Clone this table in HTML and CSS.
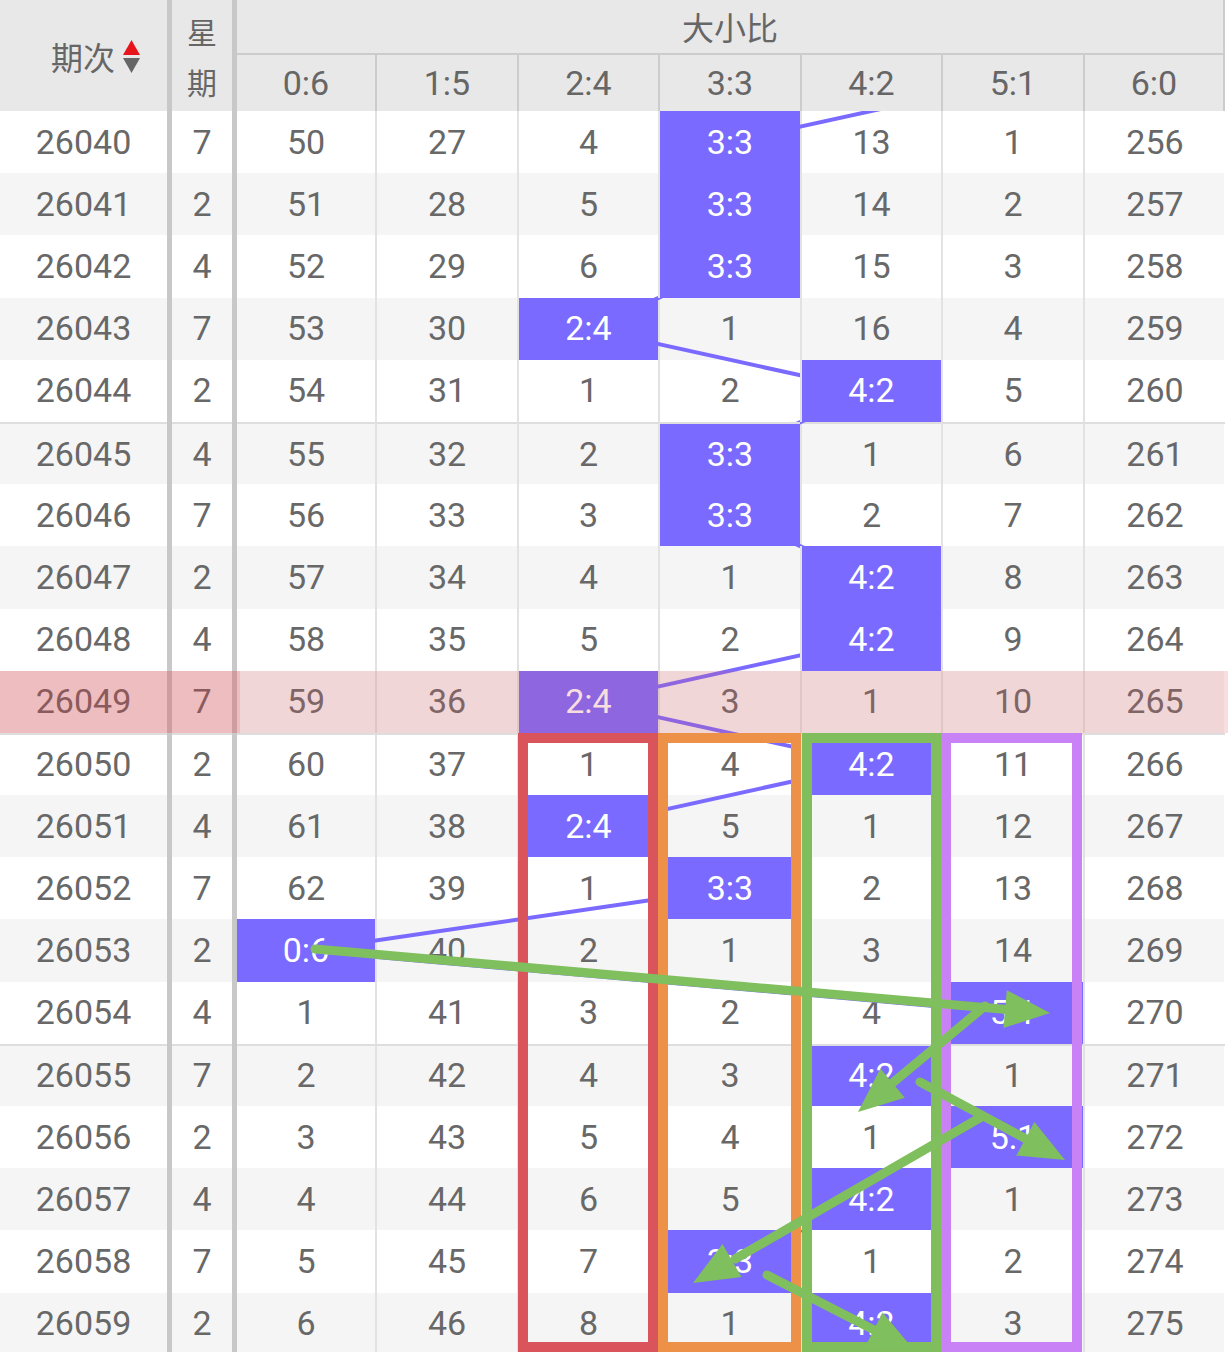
FILE: index.html
```html
<!DOCTYPE html>
<html lang="zh">
<head>
<meta charset="utf-8">
<title>大小比走势</title>
<link rel="stylesheet" href="styles.css">
</head>
<body>
<div class="chart">
  <div class="head">
    <div class="hq">期次<svg class="sort" width="17" height="34" viewBox="0 0 17 34"><polygon points="8.5,0 17,15 0,15" fill="#e8141c"/><polygon points="0,18 17,18 8.5,33" fill="#666"/></svg></div>
    <div class="bar hb1"></div>
    <div class="hx"><span>星</span><span>期</span></div>
    <div class="bar hb2"></div>
    <div class="htitle">大小比</div>
    <div class="hc">0:6</div><div class="hc">1:5</div><div class="hc">2:4</div><div class="hc">3:3</div><div class="hc">4:2</div><div class="hc">5:1</div><div class="hc">6:0</div>
  </div>

  <div class="body">
    <svg class="trend" width="1228" height="1244" viewBox="0 111 1228 1244">
      <polyline fill="none" stroke="#7a6aff" stroke-width="4" points="1013,79.9 730,142.1 730,204.3 730,266.5 588.5,328.7 871.5,390.9 730,453.1 730,515.3 871.5,577.5 871.5,639.7 588.5,701.9 871.5,764.1 588.5,826.3 730,888.5 306,950.7 1013,1012.9 871.5,1075.1 1013,1137.3 871.5,1199.5 730,1261.7 871.5,1323.9"/>
    </svg>

    <div class="row"><div class="c">26040</div><div class="bar"></div><div class="c">7</div><div class="bar"></div><div class="c d">50</div><div class="c d">27</div><div class="c d">4</div><div class="c d b">3:3</div><div class="c d">13</div><div class="c d">1</div><div class="c d">256</div></div>
    <div class="row alt"><div class="c">26041</div><div class="bar"></div><div class="c">2</div><div class="bar"></div><div class="c d">51</div><div class="c d">28</div><div class="c d">5</div><div class="c d b">3:3</div><div class="c d">14</div><div class="c d">2</div><div class="c d">257</div></div>
    <div class="row"><div class="c">26042</div><div class="bar"></div><div class="c">4</div><div class="bar"></div><div class="c d">52</div><div class="c d">29</div><div class="c d">6</div><div class="c d b">3:3</div><div class="c d">15</div><div class="c d">3</div><div class="c d">258</div></div>
    <div class="row alt"><div class="c">26043</div><div class="bar"></div><div class="c">7</div><div class="bar"></div><div class="c d">53</div><div class="c d">30</div><div class="c d b">2:4</div><div class="c d">1</div><div class="c d">16</div><div class="c d">4</div><div class="c d">259</div></div>
    <div class="row"><div class="c">26044</div><div class="bar"></div><div class="c">2</div><div class="bar"></div><div class="c d">54</div><div class="c d">31</div><div class="c d">1</div><div class="c d">2</div><div class="c d b">4:2</div><div class="c d">5</div><div class="c d">260</div></div>
    <div class="row alt sep"><div class="c">26045</div><div class="bar"></div><div class="c">4</div><div class="bar"></div><div class="c d">55</div><div class="c d">32</div><div class="c d">2</div><div class="c d b">3:3</div><div class="c d">1</div><div class="c d">6</div><div class="c d">261</div></div>
    <div class="row"><div class="c">26046</div><div class="bar"></div><div class="c">7</div><div class="bar"></div><div class="c d">56</div><div class="c d">33</div><div class="c d">3</div><div class="c d b">3:3</div><div class="c d">2</div><div class="c d">7</div><div class="c d">262</div></div>
    <div class="row alt"><div class="c">26047</div><div class="bar"></div><div class="c">2</div><div class="bar"></div><div class="c d">57</div><div class="c d">34</div><div class="c d">4</div><div class="c d">1</div><div class="c d b">4:2</div><div class="c d">8</div><div class="c d">263</div></div>
    <div class="row"><div class="c">26048</div><div class="bar"></div><div class="c">4</div><div class="bar"></div><div class="c d">58</div><div class="c d">35</div><div class="c d">5</div><div class="c d">2</div><div class="c d b">4:2</div><div class="c d">9</div><div class="c d">264</div></div>
    <div class="row alt hl"><div class="c">26049</div><div class="bar"></div><div class="c">7</div><div class="bar"></div><div class="c d">59</div><div class="c d">36</div><div class="c d b">2:4</div><div class="c d">3</div><div class="c d">1</div><div class="c d">10</div><div class="c d">265</div></div>
    <div class="row sep"><div class="c">26050</div><div class="bar"></div><div class="c">2</div><div class="bar"></div><div class="c d">60</div><div class="c d">37</div><div class="c d">1</div><div class="c d">4</div><div class="c d b">4:2</div><div class="c d">11</div><div class="c d">266</div></div>
    <div class="row alt"><div class="c">26051</div><div class="bar"></div><div class="c">4</div><div class="bar"></div><div class="c d">61</div><div class="c d">38</div><div class="c d b">2:4</div><div class="c d">5</div><div class="c d">1</div><div class="c d">12</div><div class="c d">267</div></div>
    <div class="row"><div class="c">26052</div><div class="bar"></div><div class="c">7</div><div class="bar"></div><div class="c d">62</div><div class="c d">39</div><div class="c d">1</div><div class="c d b">3:3</div><div class="c d">2</div><div class="c d">13</div><div class="c d">268</div></div>
    <div class="row alt"><div class="c">26053</div><div class="bar"></div><div class="c">2</div><div class="bar"></div><div class="c d b">0:6</div><div class="c d">40</div><div class="c d">2</div><div class="c d">1</div><div class="c d">3</div><div class="c d">14</div><div class="c d">269</div></div>
    <div class="row"><div class="c">26054</div><div class="bar"></div><div class="c">4</div><div class="bar"></div><div class="c d">1</div><div class="c d">41</div><div class="c d">3</div><div class="c d">2</div><div class="c d">4</div><div class="c d b">5:1</div><div class="c d">270</div></div>
    <div class="row alt sep"><div class="c">26055</div><div class="bar"></div><div class="c">7</div><div class="bar"></div><div class="c d">2</div><div class="c d">42</div><div class="c d">4</div><div class="c d">3</div><div class="c d b">4:2</div><div class="c d">1</div><div class="c d">271</div></div>
    <div class="row"><div class="c">26056</div><div class="bar"></div><div class="c">2</div><div class="bar"></div><div class="c d">3</div><div class="c d">43</div><div class="c d">5</div><div class="c d">4</div><div class="c d">1</div><div class="c d b">5:1</div><div class="c d">272</div></div>
    <div class="row alt"><div class="c">26057</div><div class="bar"></div><div class="c">4</div><div class="bar"></div><div class="c d">4</div><div class="c d">44</div><div class="c d">6</div><div class="c d">5</div><div class="c d b">4:2</div><div class="c d">1</div><div class="c d">273</div></div>
    <div class="row"><div class="c">26058</div><div class="bar"></div><div class="c">7</div><div class="bar"></div><div class="c d">5</div><div class="c d">45</div><div class="c d">7</div><div class="c d b">3:3</div><div class="c d">1</div><div class="c d">2</div><div class="c d">274</div></div>
    <div class="row alt"><div class="c">26059</div><div class="bar"></div><div class="c">2</div><div class="bar"></div><div class="c d">6</div><div class="c d">46</div><div class="c d">8</div><div class="c d">1</div><div class="c d b">4:2</div><div class="c d">3</div><div class="c d">275</div></div>

    <div class="box box-red"></div>
    <div class="box box-orange"></div>
    <div class="box box-green"></div>
    <div class="box box-purple"></div>

    <svg class="arrows" width="1228" height="1244" viewBox="0 111 1228 1244">
      <g stroke="#80bf5e" stroke-width="9" stroke-linecap="round" fill="none">
        <line x1="315" y1="949" x2="1007" y2="1009.5"/>
        <line x1="985" y1="1006" x2="890" y2="1085"/>
        <line x1="920" y1="1082" x2="1028" y2="1140"/>
        <line x1="983" y1="1116" x2="735" y2="1259"/>
        <line x1="767" y1="1275" x2="876" y2="1331"/>
      </g>
      <g fill="#80bf5e">
        <polygon points="1050,1013 1003.5,1028 1006.8,990.2"/>
        <polygon points="858,1112 880.4,1068.6 904.8,1097.8"/>
        <polygon points="1065,1160 1016.4,1155.4 1034.4,1122"/>
        <polygon points="693,1283 722.5,1244 741.5,1277"/>
        <polygon points="914,1350 865.3,1346.4 882.5,1312.6"/>
      </g>
    </svg>
  </div>
</div>
</body>
</html>
```

FILE: styles.css
```css
* { box-sizing: border-box; }
html, body { margin: 0; padding: 0; background: #ffffff; }
body {
  font-family: Roboto, "Noto Sans CJK SC", sans-serif;
  color: #666666;
  width: 1228px;
  overflow: hidden;
}
.chart { width: 1228px; }

.head {
  display: grid;
  grid-template-columns: 167px 5px 60px 5px 138px 142px 141px 142px 141px 142px 142px;
  grid-template-rows: 55px 56px;
  width: 1224px;
  background: #e8e8e8;
}
.head .bar { grid-row: 1 / span 2; }
.hb1 { grid-column: 2; }
.hb2 { grid-column: 4; }
.hq {
  grid-column: 1; grid-row: 1 / span 2;
  display: flex; align-items: center; justify-content: center;
  padding-left: 24px;
  font-family: "Noto Sans CJK SC", sans-serif;
  font-size: 32px;
}
.sort { margin-left: 8px; margin-top: 2px; }
.hx {
  grid-column: 3; grid-row: 1 / span 2;
  display: flex; flex-direction: column; align-items: center; justify-content: center;
  font-family: "Noto Sans CJK SC", sans-serif;
  font-size: 30px; line-height: 50px;
}
.htitle {
  grid-column: 5 / span 7; grid-row: 1;
  display: flex; align-items: center; justify-content: center;
  font-family: "Noto Sans CJK SC", sans-serif;
  font-size: 32px;
  border-bottom: 2px solid #cccccc;
  border-right: 2px solid #cccccc;
  padding-bottom: 2px;
}
.hc {
  grid-row: 2;
  display: flex; align-items: center; justify-content: center;
  font-size: 34px;
}
.hc + .hc { border-left: 2px solid #cccccc; }
.hc:last-child { border-right: 2px solid #cccccc; }

.bar { background: #c8c8c8; }

.body { position: relative; width: 1228px; }

.row {
  display: grid;
  grid-template-columns: 167px 5px 60px 5px 138px 142px 141px 142px 141px 142px 142px;
  height: 62.2px;
  width: 1224px;
  background: #ffffff;
}
.row.alt { background: #f5f5f5; }
.c {
  display: flex; align-items: center; justify-content: center;
  font-size: 34px;
  color: #686868;
  padding-bottom: 1px;
}
.d + .d { border-left: 2px solid #e2e2e2; }
.sep .c { border-top: 2px solid #dedede; }
.b {
  background: #7a6aff;
  background-clip: padding-box;
  color: #ffffff;
  position: relative;
  z-index: 2;
}

.trend {
  position: absolute; left: 0; top: 0;
  z-index: 1;
}

.hl { position: relative; }
.hl::before, .hl::after {
  content: "";
  position: absolute; top: 0; bottom: 0;
  z-index: 3;
}
.hl::before { left: 0; width: 240px; background: rgba(220, 60, 66, 0.3); }
.hl::after { left: 240px; right: -4px; background: rgba(225, 90, 95, 0.2); }

.box {
  position: absolute;
  top: 622px;
  height: 619px;
  border: 10px solid;
  z-index: 4;
}
.box-red { left: 518px; width: 140px; border-color: #d9545b; }
.box-orange { left: 658px; width: 143px; border-color: #ee9148; }
.box-green { left: 802px; width: 139px; border-color: #80bd5d; }
.box-purple { left: 941px; width: 141px; border-color: #c982f5; }

.arrows {
  position: absolute; left: 0; top: 0;
  z-index: 5;
}
```
